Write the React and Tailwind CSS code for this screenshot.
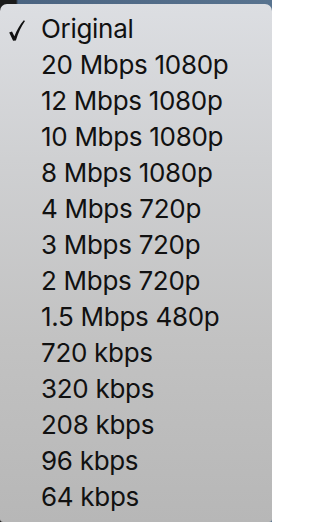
import React from 'react';

const options = [
  'Original',
  '20 Mbps 1080p',
  '12 Mbps 1080p',
  '10 Mbps 1080p',
  '8 Mbps 1080p',
  '4 Mbps 720p',
  '3 Mbps 720p',
  '2 Mbps 720p',
  '1.5 Mbps 480p',
  '720 kbps',
  '320 kbps',
  '208 kbps',
  '96 kbps',
  '64 kbps',
];

// macOS style menu checkmark, heavier left stroke tapering to the top right
const Check = () => (
  <svg width="16" height="21" viewBox="0 0 16 21" className="text-[#111]">
    <path
      d="M0.2 12.6 L3 11.4 L5.4 16.2 C7.8 10.2 10.8 4.8 14.8 0.2 L16 1 C12.2 6.4 9.4 12.4 6.9 20.4 L4.1 20.8 Z"
      fill="currentColor"
    />
  </svg>
);

const App = () => {
  const selected = 'Original';

  return (
    <div className="w-[272px] h-[522px] overflow-hidden flex flex-col bg-[linear-gradient(to_right,#1b1b1b_0px,#1b1b1b_16px,#4b6481_18px,#58738f_100%)]">
      <div className="mt-[4px] flex-1 rounded-t-[7px] rounded-b-[3px] pt-[7px] bg-[linear-gradient(to_bottom,#dcdee2_0%,#cfd0d2_30%,#c2c2c2_65%,#b7b7b7_100%)]">
        <ul className="font-['Inter',sans-serif] text-[26px] leading-[36px] text-[#111]">
          {options.map((label) => (
            <li key={label} className="h-[36px] flex items-center">
              <span className="w-[41px] flex justify-end pr-[16px] pt-[2px]">
                {label === selected && <Check />}
              </span>
              <span className="tracking-[-0.3px]">{label}</span>
            </li>
          ))}
        </ul>
      </div>
    </div>
  );
};

export default App;
